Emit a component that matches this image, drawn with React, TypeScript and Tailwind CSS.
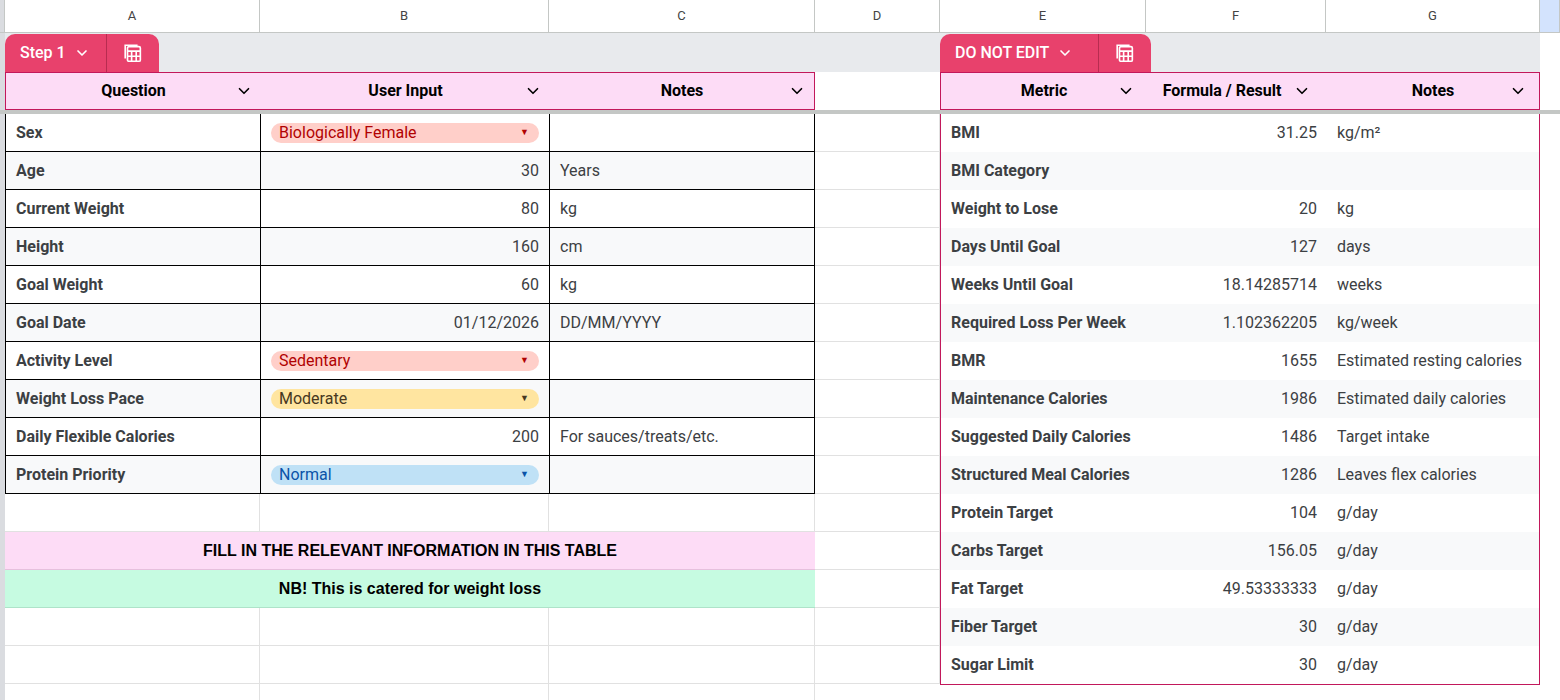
import { ChevronDown } from 'lucide-react'

const W = ['w-[5px]', 'w-[255px]', 'w-[289px]', 'w-[266px]', 'w-[125px]', 'w-[206px]', 'w-[180px]', 'w-[214px]', 'w-[20px]']

type Chip = { label: string; bg: string; fg: string }

const left: { q: string; v?: string; chip?: Chip; note?: string }[] = [
  { q: 'Sex', chip: { label: 'Biologically Female', bg: 'bg-[#ffcfc9]', fg: 'text-[#b10202]' } },
  { q: 'Age', v: '30', note: 'Years' },
  { q: 'Current Weight', v: '80', note: 'kg' },
  { q: 'Height', v: '160', note: 'cm' },
  { q: 'Goal Weight', v: '60', note: 'kg' },
  { q: 'Goal Date', v: '01/12/2026', note: 'DD/MM/YYYY' },
  { q: 'Activity Level', chip: { label: 'Sedentary', bg: 'bg-[#ffcfc9]', fg: 'text-[#b10202]' } },
  { q: 'Weight Loss Pace', chip: { label: 'Moderate', bg: 'bg-[#ffe5a0]', fg: 'text-[#473821]' } },
  { q: 'Daily Flexible Calories', v: '200', note: 'For sauces/treats/etc.' },
  { q: 'Protein Priority', chip: { label: 'Normal', bg: 'bg-[#bfe1f6]', fg: 'text-[#0a53a8]' } },
]

const right: [string, string, string][] = [
  ['BMI', '31.25', 'kg/m²'],
  ['BMI Category', '', 'Obese'],
  ['Weight to Lose', '20', 'kg'],
  ['Days Until Goal', '127', 'days'],
  ['Weeks Until Goal', '18.14285714', 'weeks'],
  ['Required Loss Per Week', '1.102362205', 'kg/week'],
  ['BMR', '1655', 'Estimated resting calories'],
  ['Maintenance Calories', '1986', 'Estimated daily calories'],
  ['Suggested Daily Calories', '1486', 'Target intake'],
  ['Structured Meal Calories', '1286', 'Leaves flex calories'],
  ['Protein Target', '104', 'g/day'],
  ['Carbs Target', '156.05', 'g/day'],
  ['Fat Target', '49.53333333', 'g/day'],
  ['Fiber Target', '30', 'g/day'],
  ['Sugar Limit', '30', 'g/day'],
]

function Calc() {
  return (
    <svg width="22" height="22" viewBox="0 0 24 24" fill="none" stroke="white" strokeWidth="1.8">
      <rect x="6" y="5" width="14" height="16" rx="1.5" />
      <path d="M3.5 18V3.5H17" />
      <path d="M6 10h14M10.5 10v11M15.5 10v11M6 15.5h14" />
    </svg>
  )
}

function Tab({ label, w }: { label: string; w: string }) {
  return (
    <div className="flex h-[38px] self-end rounded-t-[10px] bg-[#e8416c] text-white mt-[1px]">
      <div className={`flex items-center gap-2 px-[15px] border-r border-[#b82c50] ${w}`}>
        <span className="text-[16px] font-medium">{label}</span>
        <ChevronDown size={16} strokeWidth={2.5} />
      </div>
      <div className="flex items-center justify-center w-[52px]"><Calc /></div>
    </div>
  )
}

function Row({ children, h = 'h-[38px]' }: { children: React.ReactNode; h?: string }) {
  return <div className={`flex ${h}`}>{children}</div>
}

function Empty({ i }: { i: number }) {
  return <div className={`${W[i]} shrink-0 border-r border-b border-[#e1e1e1]`} />
}

export default function App() {
  const rows = Array.from({ length: 15 })
  return (
    <div className="w-[1560px] h-[700px] overflow-hidden bg-white text-[16px] text-[#3c4043]" style={{ fontFamily: 'Roboto, "Liberation Sans", sans-serif' }}>
      {/* column header */}
      <Row h="h-[33px]">
        {['', 'A', 'B', 'C', 'D', 'E', 'F', 'G', ''].map((l, i) => (
          <div key={i} className={`${W[i]} shrink-0 flex items-center justify-center text-[13px] text-[#444] border-r border-b border-[#c4c7c5] ${i === 0 ? 'bg-[#dadce0]' : i === 8 ? 'bg-[#d3e3fd]' : 'bg-white'}`}>{l}</div>
        ))}
      </Row>
      {/* tab band */}
      <Row h="h-[39px]">
        <div className={`${W[0]} bg-[#dadce0]`} />
        <div className="w-[935px] flex bg-[#e8eaed] pl-0">
          <Tab label="Step 1" w="w-[102px]" />
        </div>
        <div className="w-[600px] flex bg-[#e8eaed]">
          <Tab label="DO NOT EDIT" w="w-[159px]" />
        </div>
        <div className="w-[20px] bg-white" />
      </Row>
      {/* table header */}
      <Row>
        <div className={`${W[0]} bg-[#dadce0]`} />
        <div className="flex border border-[#c2185b] bg-[#fddcf6] w-[810px] font-bold text-black">
          {['Question', 'User Input', 'Notes'].map((h, i) => (
            <div key={h} className={`${['w-[255px]', 'w-[289px]', 'w-[264px]'][i]} flex items-center justify-center relative`}>
              {h}
              <ChevronDown size={18} strokeWidth={2.2} className="absolute right-[8px]" />
            </div>
          ))}
        </div>
        <div className="w-[125px]" />
        <div className="flex border border-[#c2185b] bg-[#fddcf6] w-[600px] font-bold text-black">
          <div className="w-[206px] flex items-center justify-center relative">Metric<ChevronDown size={18} strokeWidth={2.2} className="absolute right-[12px]" /></div>
          <div className="w-[180px] flex items-center justify-center gap-3">Formula / Result<ChevronDown size={18} strokeWidth={2.2} /></div>
          <div className="flex-1 flex items-center justify-center relative">Notes<ChevronDown size={18} strokeWidth={2.2} className="absolute right-[12px]" /></div>
        </div>
        <div className="w-[20px]" />
      </Row>
      <div className="h-[4px] bg-[#c4c7c5]" />
      <div className="flex">
        <div className="w-[5px] bg-[#dadce0] self-stretch" />
        <div className="flex flex-col">
          <div className="border-l border-black w-[810px]">
            {left.map((r, idx) => (
              <div key={r.q} className={`flex h-[38px] border-b border-black ${idx % 2 ? 'bg-[#f8f9fa]' : 'bg-white'}`}>
                <div className="w-[255px] border-r border-black flex items-center px-[10px] font-bold">{r.q}</div>
                <div className="w-[289px] border-r border-black flex items-center px-[10px]">
                  {r.chip ? (
                    <div className={`w-full h-[20px] rounded-full ${r.chip.bg} ${r.chip.fg} flex items-center justify-between pl-[8px] pr-[10px]`}>
                      <span>{r.chip.label}</span>
                      <span className="text-[9px]">▼</span>
                    </div>
                  ) : (
                    <span className="ml-auto">{r.v}</span>
                  )}
                </div>
                <div className="w-[265px] border-r border-black flex items-center px-[10px]">{r.note}</div>
              </div>
            ))}
          </div>
          <div className="flex h-[38px]"><Empty i={1} /><Empty i={2} /><Empty i={3} /></div>
          <div className="h-[38px] bg-[#fddcf6] border-b border-[#e6c0dd] flex items-center justify-center font-bold text-black" style={{ fontFamily: '"Liberation Sans", Arial, sans-serif' }}>FILL IN THE RELEVANT INFORMATION IN THIS TABLE</div>
          <div className="h-[38px] bg-[#c6fbe1] border-b border-[#aee3c9] flex items-center justify-center font-bold text-black" style={{ fontFamily: '"Liberation Sans", Arial, sans-serif' }}>NB! This is catered for weight loss</div>
          {[0, 1, 2].map(k => <div key={k} className="flex h-[38px]"><Empty i={1} /><Empty i={2} /><Empty i={3} /></div>)}
        </div>
        <div className="flex flex-col">
          {rows.map((_, k) => <div key={k} className="flex h-[38px]"><Empty i={4} /></div>)}
        </div>
        <div className="flex flex-col">
          <div className="w-[600px] border-x border-b border-[#c2185b]">
            {right.map((r, idx) => (
              <div key={r[0]} className={`flex h-[38px] ${idx % 2 ? 'bg-[#f8f9fa]' : 'bg-white'}`}>
                <div className="w-[206px] flex items-center px-[10px] font-bold">{r[0]}</div>
                <div className="w-[180px] flex items-center px-[10px] justify-end">{r[1]}</div>
                <div className="flex-1 flex items-center px-[10px]">{r[0] === 'BMI Category' ? '' : r[2]}</div>
                {r[0] === 'BMI Category' && null}
              </div>
            ))}
          </div>
        </div>
      </div>
    </div>
  )
}
